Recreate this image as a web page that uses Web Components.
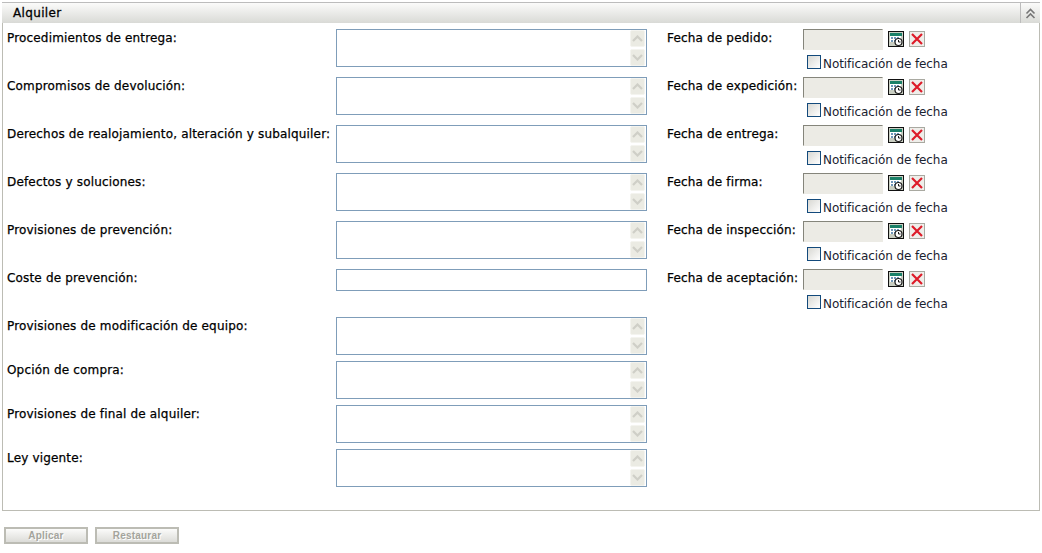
<!DOCTYPE html>
<html lang="es">
<head>
<meta charset="utf-8">
<title>Alquiler</title>
<style>
  html, body { margin: 0; padding: 0; background: #fff; }
  body { font: 12px "DejaVu Sans", Verdana, sans-serif; color: #000; }
  .page { width: 1042px; height: 553px; padding: 2px 2px 0 2px; box-sizing: border-box; }
  .columns { display: flex; }
  .left { width: 644px; flex: none; }
  .right { flex: 1; padding-left: 20px; }
  .actions { display: flex; gap: 7px; padding: 16px 0 0 2px; }
</style>
</head>
<body>
<div class="page">
  <lease-panel title="Alquiler">
    <div class="columns">
      <div class="left">
        <memo-field label="Procedimientos de entrega:"></memo-field>
        <memo-field label="Compromisos de devolución:"></memo-field>
        <memo-field label="Derechos de realojamiento, alteración y subalquiler:"></memo-field>
        <memo-field label="Defectos y soluciones:"></memo-field>
        <memo-field label="Provisiones de prevención:"></memo-field>
        <memo-field label="Coste de prevención:" single></memo-field>
        <memo-field label="Provisiones de modificación de equipo:" tight></memo-field>
        <memo-field label="Opción de compra:" tight></memo-field>
        <memo-field label="Provisiones de final de alquiler:" tight></memo-field>
        <memo-field label="Ley vigente:" tight></memo-field>
      </div>
      <div class="right">
        <date-field label="Fecha de pedido:"></date-field>
        <date-field label="Fecha de expedición:"></date-field>
        <date-field label="Fecha de entrega:"></date-field>
        <date-field label="Fecha de firma:"></date-field>
        <date-field label="Fecha de inspección:"></date-field>
        <date-field label="Fecha de aceptación:"></date-field>
      </div>
    </div>
  </lease-panel>
  <div class="actions">
    <push-button>Aplicar</push-button>
    <push-button>Restaurar</push-button>
  </div>
</div>

<script>
/* ===== PANEL ===== */
class LeasePanel extends HTMLElement {
  constructor() {
    super();
    this.attachShadow({ mode: 'open' });
    this.shadowRoot.innerHTML = `
      <style>
        :host { display: block; width: 1038px; height: 509px; box-sizing: border-box; border: 1px solid #bcbcb4; border-top: 0; }
        .head {
          display: flex; align-items: center; height: 21px; margin: 0 -1px;
          border-top: 1px solid #bcbcbc; box-sizing: border-box;
          background: linear-gradient(#fbfbfa, #d9dad6);
        }
        .title { flex: 1; padding-left: 11px; font-size: 12px; letter-spacing: .35px; color: #000; -webkit-text-stroke: .3px #000; }
        .toggle { width: 20px; height: 20px; border-left: 1px solid #bcbcbc; display: flex; align-items: center; justify-content: center; box-sizing: border-box; }
        .body { padding: 6px 0 0 0; }
      </style>
      <div class="head">
        <span class="title">${this.getAttribute('title')}</span>
        <span class="toggle">
          <svg width="11" height="11" viewBox="0 0 11 11" fill="none" stroke="#777" stroke-width="1.6">
            <path d="M1.5 5.5 5.5 1.5 9.5 5.5"/><path d="M1.5 10 5.5 6 9.5 10"/>
          </svg>
        </span>
      </div>
      <div class="body"><slot></slot></div>`;
  }
}

/* ===== CHAMP TEXTE ===== */
class MemoField extends HTMLElement {
  constructor() {
    super();
    this.attachShadow({ mode: 'open' });
    const single = this.hasAttribute('single');
    const arrow = d => `<span class="step"><svg width="11" height="7" viewBox="0 0 11 7" fill="none" stroke="#cfcfc7" stroke-width="2.2"><path d="${d}"/></svg></span>`;
    this.shadowRoot.innerHTML = `
      <style>
        :host { display: flex; height: 48px; }
        :host([tight]) { height: 44px; }
        label { width: 333px; flex: none; padding: 2px 0 0 4px; box-sizing: border-box; white-space: nowrap; letter-spacing: .17px; -webkit-text-stroke: .25px #000; }
        .box { width: 311px; height: ${single ? 22 : 38}px; box-sizing: border-box; border: 1px solid #7f9db9; display: flex; background: #fff; }
        textarea, input { flex: 1; min-width: 0; border: 0; padding: 0; margin: 0; outline: 0; resize: none; background: #fff; overflow: hidden; }
        .bar { width: 15px; margin-right: 1px; display: flex; flex-direction: column; justify-content: space-between; }
        .step { height: 17px; box-sizing: border-box; border: 1px solid #f4f4ef; background: #ebebe3; border-radius: 2px; display: flex; align-items: center; justify-content: center; }
      </style>
      <label>${this.getAttribute('label')}</label>
      <div class="box">
        ${single ? '<input type="text">' : `<textarea></textarea><div class="bar">${arrow('M1 6 5.5 1.5 10 6')}${arrow('M1 1 5.5 5.5 10 1')}</div>`}
      </div>`;
  }
}

/* ===== CHAMP DATE ===== */
class DateField extends HTMLElement {
  constructor() {
    super();
    this.attachShadow({ mode: 'open' });
    this.shadowRoot.innerHTML = `
      <style>
        :host { display: grid; grid-template-columns: 136px auto; height: 48px; align-content: start; }
        .name { padding-top: 2px; white-space: nowrap; letter-spacing: .17px; -webkit-text-stroke: .25px #000; }
        .controls { display: flex; align-items: center; height: 21px; gap: 5px; }
        .value { width: 80px; height: 21px; box-sizing: border-box; border: 1px solid #85857b; border-right-color: #ecebe5; border-bottom-color: #ecebe5; background: #ecebe5; }
        .cal, .clear { width: 16px; height: 16px; margin-top: -1px; }
        .notify { grid-column: 2; display: flex; height: 14px; margin: 5px 0 0 4px; white-space: nowrap; color: #1a2230; letter-spacing: -.09px; }
        .notify span:last-child { margin-top: 2px; line-height: 14px; }
        .check { width: 14px; height: 14px; box-sizing: border-box; border: 1px solid #134a7c; background: linear-gradient(135deg, #d8d8d3, #fff); margin-right: 2px; flex: none; }
      </style>
      <span class="name">${this.getAttribute('label')}</span>
      <div class="controls">
        <span class="value"></span>
        <svg class="cal" viewBox="0 0 16 16">
          <rect x=".5" y=".5" width="15" height="15" fill="#c9cec2" stroke="#111"/>
          <rect x="2" y="2" width="12" height="3" fill="#1a8068"/>
          <rect x="2" y="5" width="11" height="6" fill="#fff"/>
          <path d="M3 6h2v2H3zM6 6h2v2H6zM9 6h2v2H9zM3 9h2v2H3zM6 9h2v2H6z" fill="#6f96b8"/>
          <circle cx="10.5" cy="11" r="3.5" fill="#fff" stroke="#1a1a1a" stroke-width="1.2"/>
          <path d="M10.5 9v2h2" fill="none" stroke="#1a1a1a"/>
        </svg>
        <svg class="clear" viewBox="0 0 16 16">
          <rect x=".5" y=".5" width="15" height="15" fill="#efeeea" stroke="#a9a9a1"/>
          <path d="M3 3 13 13M13 3 3 13" stroke="#dd1c2a" stroke-width="2.2"/>
        </svg>
      </div>
      <div class="notify"><span class="check"></span><span>Notificación de fecha</span></div>`;
  }
}

/* ===== BOUTON ===== */
class PushButton extends HTMLElement {
  constructor() {
    super();
    this.attachShadow({ mode: 'open' });
    this.shadowRoot.innerHTML = `
      <style>
        :host { display: inline-flex; width: 84px; height: 17px; box-sizing: border-box; border: 2px solid #bcbcb4; background: linear-gradient(#fbfbfa, #dcdcd8);
          align-items: center; justify-content: center; font: bold 10px "Liberation Sans", Arial, sans-serif; letter-spacing: .2px; color: #a4a49c; text-shadow: 1px 1px 0 #fff; }
      </style>
      <slot></slot>`;
  }
}

customElements.define('lease-panel', LeasePanel);
customElements.define('memo-field', MemoField);
customElements.define('date-field', DateField);
customElements.define('push-button', PushButton);
</script>
</body>
</html>
